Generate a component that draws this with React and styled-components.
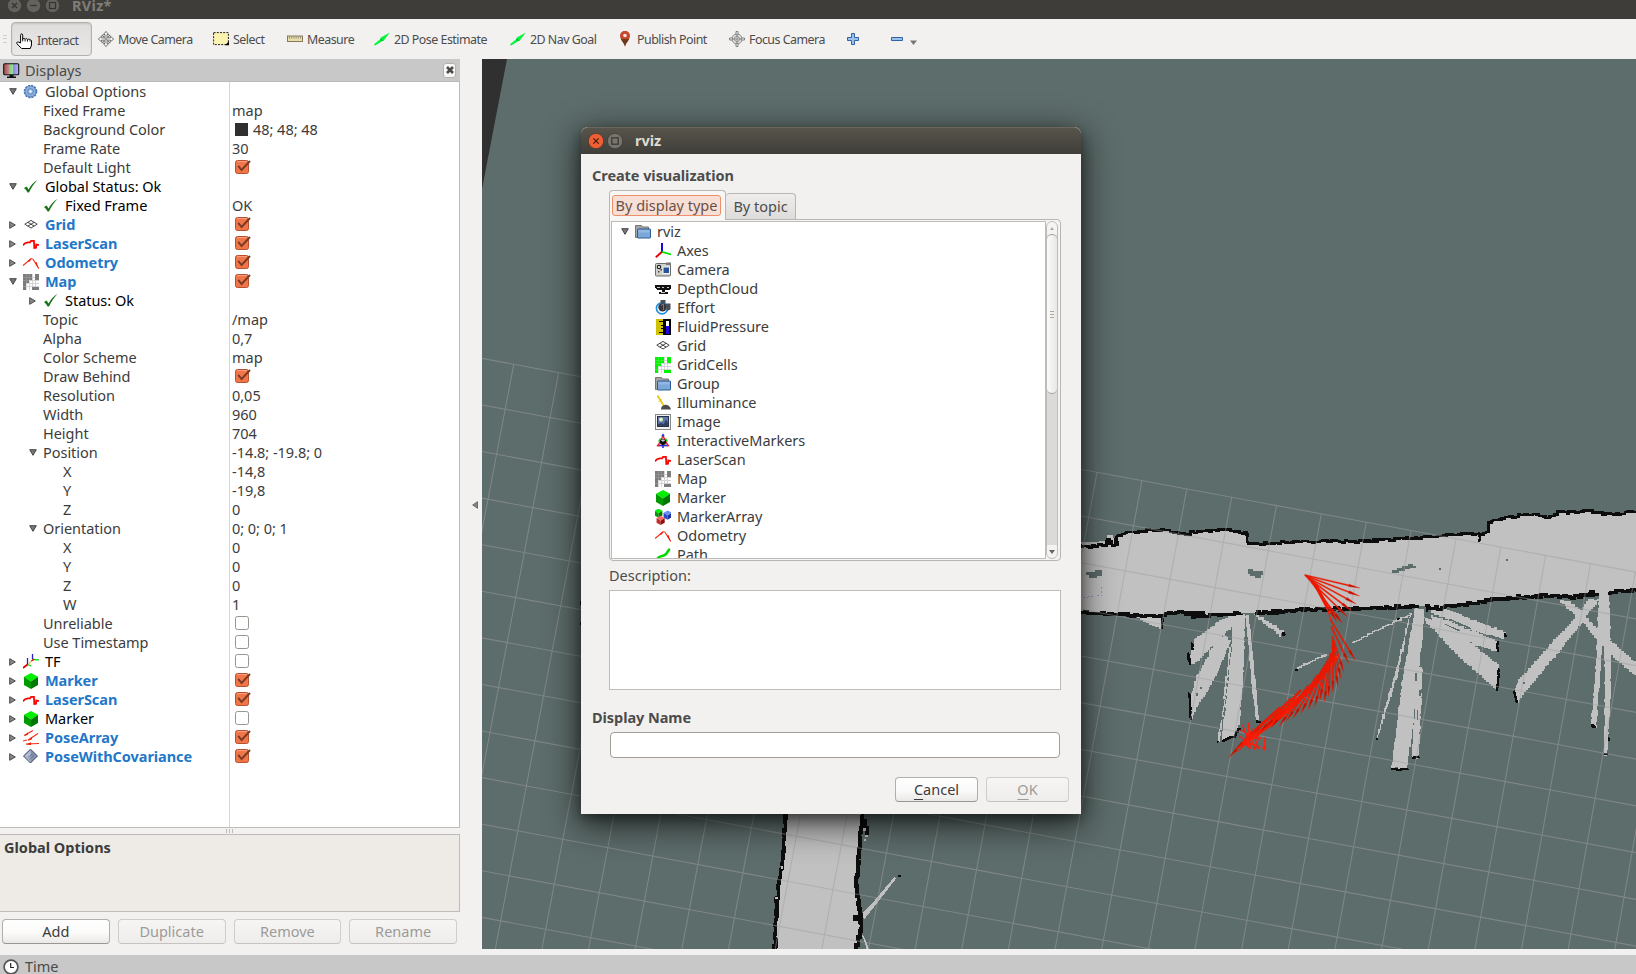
import React from "react";
import styled, { createGlobalStyle, css } from "styled-components";

const GlobalStyle = createGlobalStyle`
  * { box-sizing: border-box; }
  html, body { margin: 0; padding: 0; overflow: hidden; }
  body {
    font-family: "Noto Sans", "Open Sans", sans-serif;
    font-size: 14.5px;
    line-height: 19px;
    color: #3c3c3c;
    background: #f2f1ef;
  }
  svg { display: block; }
`;

/* ---------- window frame ---------- */

const Window = styled.div`
  position: relative;
  width: 1636px;
  height: 974px;
  display: flex;
  flex-direction: column;
  background: #f2f1ef;
  overflow: hidden;
`;

const TitleBar = styled.header`
  height: 19px;
  flex: none;
  display: flex;
  align-items: center;
  gap: 4px;
  padding: 0 0 8px 7px;
  background: #3e3d39;
  overflow: hidden;
`;

const TitleText = styled.span`
  margin-left: 8px;
  font-weight: 700;
  letter-spacing: 0.3px;
  color: #807d78;
`;

const Toolbar = styled.nav`
  height: 40px;
  flex: none;
  display: flex;
  align-items: center;
  padding-left: 3px;
  background: #f2f1ef;
`;

const Handle = styled.span`
  width: 4px;
  height: 8px;
  margin-right: 4px;
  border-top: 1px solid #d0cecb;
  border-bottom: 1px solid #d0cecb;
  background: linear-gradient(#f2f1ef 0 2px, #d0cecb 2px 3px, #f2f1ef 3px);
`;

const Tool = styled.button`
  width: ${(p) => p.$w}px;
  height: 34px;
  flex: none;
  display: flex;
  align-items: center;
  gap: 4px;
  padding: 0;
  border: 1px solid transparent;
  border-width: 1px 0;
  background: none;
  font: inherit;
  font-size: 12.4px;
  letter-spacing: -0.5px;
  white-space: nowrap;
  color: #4c4c4c;
  ${(p) =>
    p.$active &&
    css`
      margin-right: 6px;
      padding: 3px 0 0 4px;
      gap: 5px;
      border: 1px solid #b4b1ad;
      border-radius: 4px;
      background: linear-gradient(#dfdddb, #ebe9e7);
      box-shadow: inset 0 1px 2px rgba(0, 0, 0, 0.12);
    `}
`;

const Workspace = styled.main`
  height: 890px;
  flex: none;
  display: flex;
`;

const StatusBar = styled.footer`
  height: 19px;
  margin-top: 6px;
  flex: none;
  display: flex;
  align-items: center;
  gap: 6px;
  padding: 4px 0 0 3px;
  background: #c8c8c8;
  color: #4a4a4a;
  overflow: hidden;
`;

/* ---------- displays panel ---------- */

const Panel = styled.aside`
  width: 460px;
  flex: none;
  display: flex;
  flex-direction: column;
`;

const PanelHeader = styled.div`
  height: 23px;
  display: flex;
  align-items: center;
  gap: 5px;
  padding: 0 4px 0 3px;
  background: #c8c8c8;
  border-bottom: 1px solid #bcbab6;
  color: #4a4a4a;
`;

const PanelClose = styled.span`
  width: 13px;
  height: 15px;
  margin-left: auto;
  display: grid;
  place-items: center;
  border: 1px solid #b5b2ad;
  border-radius: 3px;
  background: #f8f7f6;
`;

const Tree = styled.div`
  height: 746px;
  display: flex;
  flex-direction: column;
  background: #fff;
  border-right: 1px solid #bebcb8;
  border-bottom: 1px solid #bebcb8;
`;

const Row = styled.div`
  height: 19px;
  flex: none;
  display: flex;
`;

const NameCell = styled.div`
  width: ${(p) => (p.$wide ? "100%" : "230px")};
  display: flex;
  align-items: center;
  padding-left: ${(p) => 3 + p.$depth * 20}px;
  border-right: ${(p) => (p.$wide ? "none" : "1px solid #d8d6d4")};
`;

const ArrowSlot = styled.span`
  width: 20px;
  flex: none;
  display: grid;
  place-items: center;
  padding-right: 1px;
`;

const IconSlot = styled.span`
  width: 16px;
  height: 16px;
  margin-right: 6px;
  flex: none;
`;

const Label = styled.span`
  white-space: nowrap;
  color: ${(p) => ({ on: "#2277c8", status: "#000" })[p.$tone] || "#3c3c3c"};
  font-weight: ${(p) => (p.$tone === "on" ? 700 : 400)};
  letter-spacing: ${(p) => (p.$tone === "on" ? "-0.06px" : "-0.03px")};
`;

const ValueCell = styled.div`
  display: flex;
  align-items: center;
  gap: 4px;
  padding-left: 2px;
`;

const Swatch = styled.span`
  width: 13px;
  height: 13px;
  margin: 0 1px 0 3px;
  background: #303030;
`;

const Filler = styled.div`
  flex: 1;
  width: 230px;
  border-right: 1px solid #d8d6d4;
`;

const Splitter = styled.div`
  height: 6px;
  display: flex;
  justify-content: center;
  align-items: center;
  gap: 2px;
  padding-right: 2px;
`;

const Grip = styled.i`
  width: 1px;
  height: 4px;
  background: #bdbbb7;
`;

const HelpBox = styled.div`
  height: 78px;
  padding: 3px 4px;
  border: 1px solid #bebcb8;
  border-left: none;
  background: #eeebe6;
  font-weight: 700;
`;

const ButtonRow = styled.div`
  display: flex;
  gap: 8px;
  padding: 7px 3px 0 2px;
`;

const PushButton = styled.button`
  flex: ${(p) => (p.$w ? "none" : 1)};
  width: ${(p) => (p.$w ? p.$w + "px" : "auto")};
  height: 25px;
  padding: 0;
  border: 1px solid ${(p) => (p.$off ? "#cfcdca" : "#b2afab")};
  border-bottom-color: ${(p) => (p.$off ? "#c5c3c0" : "#999693")};
  border-radius: 4px;
  background: ${(p) => (p.$off ? "linear-gradient(#f6f5f4, #eeedeb)" : "linear-gradient(#fff, #fbfaf9 55%, #ebe9e7)")};
  font: inherit;
  color: ${(p) => (p.$off ? "#9c9b99" : "#3c3c3c")};
`;

const Mnemonic = styled.span`
  text-decoration: underline;
  text-underline-offset: 4px;
  text-decoration-thickness: 1px;
`;

const Gutter = styled.div`
  width: 22px;
  flex: none;
  display: flex;
  align-items: center;
  justify-content: center;
  padding: 1px 0 0 7px;
`;

const Viewport = styled.section`
  flex: 1;
  background: #5d6d6b;
`;

/* ---------- dialog ---------- */

const Dialog = styled.div`
  position: absolute;
  left: 581px;
  top: 127px;
  width: 500px;
  height: 687px;
  display: flex;
  flex-direction: column;
  background: #f2f1ef;
  border-radius: 7px 7px 0 0;
  box-shadow: 0 9px 34px 2px rgba(0, 0, 0, 0.68), 0 4px 12px rgba(0, 0, 0, 0.35);
`;

const DialogTitle = styled.div`
  height: 27px;
  display: flex;
  align-items: center;
  gap: 3px;
  padding: 0 0 1px 7px;
  border-radius: 7px 7px 0 0;
  border-top: 1px solid #6a6659;
  background: linear-gradient(#57544b, #3f3e39);
  color: #dfdbd2;
  font-weight: 700;
`;

const DialogName = styled.span`
  margin-left: 9px;
`;

const DialogBody = styled.div`
  display: flex;
  flex-direction: column;
  padding: 11px 20px 0 28px;
`;

const Heading = styled.h2`
  margin: 0 0 0 -17px;
  font-size: 14.5px;
  line-height: 20px;
  font-weight: 700;
  letter-spacing: -0.06px;
  color: #4c4c4c;
`;

const Tabs = styled.div`
  height: 29px;
  margin-top: 5px;
  display: flex;
  align-items: flex-end;
  position: relative;
`;

const Tab = styled.div`
  height: ${(p) => (p.$active ? 30 : 26)}px;
  width: ${(p) => (p.$active ? 117 : 70)}px;
  margin-bottom: ${(p) => (p.$active ? -1 : 0)}px;
  padding: ${(p) => (p.$active ? "4px 4px 3px 2px" : "0")};
  display: flex;
  align-items: center;
  justify-content: center;
  border: 1px solid #b9b6b2;
  border-bottom: none;
  border-left-width: ${(p) => (p.$active ? 1 : 0)}px;
  border-radius: 4px 4px 0 0;
  background: ${(p) => (p.$active ? "#f8f7f6" : "linear-gradient(#efeeec, #dedcda)")};
  color: #4c4c4c;
`;

const TabFocus = styled.span`
  width: 109px;
  height: 21px;
  margin-bottom: 1px;
  display: grid;
  place-items: center;
  white-space: nowrap;
  border: 1px solid #ee8f6c;
  border-radius: 3px;
  background: #f8dfd6;
  color: #6b4f46;
`;

const TabPane = styled.div`
  height: 342px;
  padding: 1px;
  display: flex;
  border: 1px solid #b9b6b2;
  border-radius: 0 4px 4px 4px;
  background: #f5f4f2;
`;

const TypeList = styled.div`
  width: 435px;
  height: 338px;
  border: 1px solid #bebcb8;
  background: #fff;
  overflow: hidden;
`;

const ScrollBar = styled.div`
  flex: 1;
  height: 338px;
  margin-right: 1px;
  display: flex;
  flex-direction: column;
  border: 1px solid #bebcb8;
  border-radius: 6px;
  background: #dcdad8;
  overflow: hidden;
`;

const ScrollArrow = styled.span`
  height: 13px;
  flex: none;
  display: grid;
  place-items: center;
  background: #f4f3f2;
`;

const Thumb = styled.span`
  height: 160px;
  margin-top: -1px;
  flex: none;
  display: flex;
  flex-direction: column;
  align-items: center;
  justify-content: center;
  gap: 2px;
  border: 1px solid #a19e9a;
  border-width: 1px 0;
  border-radius: 6px;
  background: linear-gradient(90deg, #fbfbfa, #e9e7e5);
`;

const ThumbLine = styled.i`
  width: 4px;
  height: 1px;
  background: #aaa7a3;
`;

const Track = styled.span`
  flex: 1;
`;

const FieldLabel = styled.label`
  margin-top: 5px;
  line-height: 19px;
  color: #4c4c4c;
`;

const DescriptionBox = styled.div`
  height: 100px;
  margin: 5px 0 17px;
  border: 1px solid #bebcb8;
  background: #fff;
`;

const NameInput = styled.input`
  height: 26px;
  margin: 5px 1px 19px;
  border: 1px solid #a19e9a;
  border-radius: 4px;
  background: #fff;
`;

const DialogActions = styled.div`
  display: flex;
  justify-content: flex-end;
  gap: 8px;
  margin-right: -8px;
`;

/* ---------- small graphics ---------- */

const Svg = ({ s = 16, children, ...rest }) => (
  <svg width={s} height={s} viewBox={`0 0 ${s} ${s}`} {...rest}>
    {children}
  </svg>
);

const Down = () => (
  <svg width="8" height="7" viewBox="0 0 8 7">
    <path d="M.7.7h6.6L4 6.3z" fill="#777" stroke="#444" />
  </svg>
);
const Right = () => (
  <svg width="7" height="8" viewBox="0 0 7 8">
    <path d="M.7.7v6.6L6.3 4z" fill="#888" stroke="#4a4a4a" />
  </svg>
);

const WindowButton = ({ kind, fill, stroke, s = 15 }) => (
  <svg width={s} height={s} viewBox="0 0 15 15">
    <circle cx="7.5" cy="7.5" r="7.2" fill={fill} stroke="#33322e" strokeWidth=".6" />
    {kind === "close" && <path d="M5 5l5 5M10 5l-5 5" stroke={stroke} strokeWidth="1.2" />}
    {kind === "min" && <path d="M4.200 7.500h6.600" stroke={stroke} strokeWidth="1.200" />}
    {kind === "max" && <rect x="4.500" y="4.500" width="6" height="6" fill="none" stroke={stroke} strokeWidth="1.200" />}
  </svg>
);

const Check = ({ on }) => (
  <svg width="19" height="17" viewBox="-1 0 19 17">
    <rect x="2.500" y="1.500" width="13" height="13" rx="2" fill={on ? "#f0764a" : "#fff"} stroke={on ? "#b9502c" : "#98948f"} />
    {on && <path d="M4 2.600h10" stroke="#f9a382" />}
    {on && <path d="M5.200 6.800l3.400 4.200L17 2" fill="none" stroke="#7a3a24" strokeWidth="1.900" />}
  </svg>
);

const cells = [
  [0, 0, 9, 6], [12, 0, 4, 6], [0, 6, 6, 3], [0, 9, 3, 7], [9, 13, 7, 3],
];
const CellGrid = ({ color }) => (
  <Svg shapeRendering="crispEdges">
    <path d="M3 0h1v16h-1zM6 0h1v16h-1zM9 0h1v16h-1zM12 0h1v16h-1zM0 3h16v1H0zM0 6h16v1H0zM0 9h16v1H0zM0 12h16v1H0z" fill="#d4d4d4" />
    {cells.map(([x, y, w, h], i) => (
      <rect key={i} x={x} y={y} width={w} height={h} fill={color} />
    ))}
    <path d="M3 0h1v16h-1zM6 0h1v9h-1zM0 3h9v1H0zM0 6h6v1H0zM0 12h3v1H0z" fill="#fff" opacity=".16" />
  </Svg>
);

const Cube = ({ x = 0, y = 0, k = 1, top = "#00f000", left = "#009a00", right = "#007800" }) => (
  <g transform={`translate(${x} ${y}) scale(${k})`}>
    <path d="M8 0l7 3.800L8 8.500 1 3.800z" fill={top} />
    <path d="M1 3.800l7 4.700V16l-7-4z" fill={left} />
    <path d="M15 3.800L8 8.500V16l7-4z" fill={right} />
  </g>
);

const GreenArrow = () => (
  <Svg>
    <path d="M0 13.200l1.200 1.300L8 10.200l1.600-.4L15.800 1.500 6.500 6.800l-.3 1.400z" fill="#00f53a" />
    <path d="M6.300 7.800l3.200 2L7.300 9.600z" fill="#087d20" />
  </Svg>
);

const icons = {
  gear: (
    <Svg>
      <circle cx="7.500" cy="7.500" r="5.600" fill="#8fb2dc" stroke="#3a6cab" strokeWidth=".8" />
      <circle cx="7.500" cy="7.500" r="6.100" fill="none" stroke="#4a79b5" strokeWidth="1.500" strokeDasharray="2 1.190" />
      <circle cx="7.500" cy="7.500" r="2.800" fill="#a9c5e6" stroke="#4a7cbb" strokeWidth=".9" />
      <circle cx="7.500" cy="7.500" r="1.100" fill="#fff" />
    </Svg>
  ),
  ok: (
    <Svg>
      <path d="M1 9l2.600-1.600 2 3C7.800 6.300 10.500 3 14.500 1 11 4.500 8.300 8.500 6 13.500H4.600C3.700 11.800 2.500 10.300 1 9z" fill="#1a741a" />
    </Svg>
  ),
  grid: (
    <Svg>
      <path d="M1.800 7.200L8 3.400l6.200 3.800L8 11zM4.900 5.300l6.200 3.800M11.100 5.300L4.900 9.100" fill="none" stroke="#444" strokeWidth="1" />
    </Svg>
  ),
  laser: (
    <Svg>
      <path d="M0 9.300l2-2.100 3-.8h2l1.200-1.600h2.700l.4 7.200 1.700-.3.200-3.200 2.800.4" fill="none" stroke="#f00" strokeWidth="1.800" />
    </Svg>
  ),
  odometry: (
    <Svg>
      <path d="M0 10.500L8.500 3.500M9.500 3.500L15.800 13.500" stroke="#f62b10" strokeWidth="1.100" />
      <path d="M4.500 6L9 2.800 6.500 6.800zM12 7.800l1.600-.8L15.800 14.500z" fill="#f01800" />
    </Svg>
  ),
  map: <CellGrid color="#7c7c7c" />,
  gridcells: <CellGrid color="#00f400" />,
  tf: (
    <Svg>
      <path d="M4.500 4v7M9.500 0v5" stroke="#22c" strokeWidth="1.300" />
      <path d="M4.500 10.500l4 1.500M10 5.500l6 .3" stroke="#0d0" strokeWidth="1.300" />
      <path d="M4.500 10.500L0 14" stroke="#e00" strokeWidth="1.800" />
      <path d="M10 5.500L5.500 10" stroke="#ecc070" strokeWidth="1.500" />
      <path d="M11 5L8.500 7" stroke="#e00" strokeWidth="1.500" />
    </Svg>
  ),
  marker: (
    <Svg>
      <Cube />
    </Svg>
  ),
  markers: (
    <Svg>
      <Cube x={-1} y={-0.3} k={0.56} />
      <Cube x={8} y={1.5} k={0.58} top="#6a90f5" left="#2848c8" right="#1832a0" />
      <Cube x={1} y={6.700} k={0.58} top="#f26a6a" left="#c82828" right="#8c1010" />
    </Svg>
  ),
  posearray: (
    <Svg>
      <path d="M1 5.500l9-5M5 10l10-6.500M3 14l13-.5M0 11l4-1" stroke="#f43018" strokeWidth="1.200" />
      <path d="M1 6.300l4-3.800v2.300zM5 11l4-4v2.200zM3 14.500l5-2.200v2.600z" fill="#e81c00" />
    </Svg>
  ),
  covariance: (
    <Svg>
      <path d="M7.500.2l7 6.800-7 7-7-7z" fill="#8592ad" stroke="#3c4866" />
      <path d="M7.500 1.200v12l-6-6.200z" fill="#b4bed0" />
      <path d="M5 8.500l5-4M6 10.500l5-4" stroke="#6a7898" />
    </Svg>
  ),
  folder: (
    <Svg>
      <path d="M.5 13.500v-12h6l1 1.500h6v10z" fill="#a4a4a2" stroke="#777" />
      <rect x="2.500" y="5" width="13" height="9" rx=".5" fill="#7ba7d9" stroke="#2d5c98" />
      <path d="M3.500 6h11v2.500h-11z" fill="#94b8e2" />
    </Svg>
  ),
  axes: (
    <Svg>
      <path d="M7 0v9" stroke="#0000e8" strokeWidth="1.900" />
      <path d="M7 8.800l9 2.600" stroke="#00ea00" strokeWidth="1.900" />
      <path d="M7 8.800L.8 14.300" stroke="#e80000" strokeWidth="1.900" />
    </Svg>
  ),
  camera: (
    <Svg>
      <rect x=".5" y="1.500" width="15" height="12.500" rx="1" fill="#cfcfcb" stroke="#6c6c68" />
      <circle cx="4" cy="5" r="1.700" fill="#fff" stroke="#222" strokeWidth="1.200" />
      <rect x="8" y="5" width="6.500" height="6.500" fill="#27529a" stroke="#f4f4f4" />
      <path d="M11 .5h5v2.500h-5z" fill="#777" />
      <path d="M3 9h1.500v1.500H3zM5.500 7H7v1.500H5.500z" fill="#444" />
    </Svg>
  ),
  depth: (
    <Svg shapeRendering="crispEdges">
      <path d="M0 4h16v3l-2 2H2L0 7zM7 9h3v2H7zM4 11h9v2H4z" fill="#111" />
      <path d="M2 6h3M7 6h2M12 6h2M6 11.500h4" stroke="#ccc" />
    </Svg>
  ),
  effort: (
    <Svg>
      <circle cx="7" cy="8.300" r="5.600" fill="none" stroke="#1b8fe6" strokeWidth="1.600" />
      <circle cx="7.500" cy="7.300" r="4.200" fill="#34383c" />
      <path d="M5.500 0h5v3.500h-5zM11 3.500h4.500v6L11.500 11z" fill="#4a5056" />
      <path d="M6 5.500l2.500-1.500v6" stroke="#777" fill="none" />
    </Svg>
  ),
  pressure: (
    <Svg shapeRendering="crispEdges">
      <rect x="1" y="0" width="8" height="16" fill="#cfc000" />
      <path d="M4 2h5v1H4zM6 6h3v1H6zM6 9h3v1H6zM4 13h5v1H4zM8 0h8v16H8z" fill="#000" />
      <rect x="11" y="2" width="3" height="6" fill="#fff" />
      <rect x="11" y="7" width="3" height="8" fill="#2200e0" />
    </Svg>
  ),
  illuminance: (
    <Svg>
      <path d="M6 14.500c0-6.500 9-6 10 0z" fill="#4c4c4c" />
      <path d="M2.500.5L8.300 10" stroke="#ecc60c" strokeWidth="1.800" />
      <path d="M3.500 6.500l3.500-2" stroke="#ecc60c" strokeWidth="1" />
    </Svg>
  ),
  image: (
    <Svg>
      <rect x=".5" y=".5" width="15" height="15" fill="#f2f2f0" stroke="#888" />
      <rect x="2.500" y="2.500" width="11" height="10" fill="#5a76ac" stroke="#26324c" />
      <path d="M3 10l3-1 3 1 1-3 1.500-1 2 4.500V12H3z" fill="#33415f" />
      <circle cx="6" cy="5.500" r="1.900" fill="#eef2b0" />
    </Svg>
  ),
  interactive: (
    <Svg>
      <path d="M8 3L3 12.500h10z" fill="#fff" stroke="#e02038" strokeWidth="1.400" />
      <path d="M4 12.500h8" stroke="#2233e0" strokeWidth="1.400" />
      <path d="M6.200 3.200L8 .2l1.800 3z" fill="#2233e0" />
      <path d="M5.500 5.500l-1.800 3M10.500 5.500l1.800 3" stroke="#0c0" strokeWidth="1.400" />
      <path d="M1.300 13l2-2 .5 2.500zM14.700 13l-2-2-.5 2.500z" fill="#e02038" />
      <path d="M5 7.500l3-2 3 2v3l-3 2-3-2z" fill="#111" />
      <path d="M5.800 7.500L8 6.200l2.200 1.300L8 8.800z" fill="#ccc" />
      <path d="M7.200 12.500h1.600v2.500H7.200z" fill="#2233e0" />
    </Svg>
  ),
  path: (
    <Svg>
      <path d="M1.500 14c1-6 6.500-4 9-6.500 2-1.500 2-4 4.500-5.500" fill="none" stroke="#00d800" strokeWidth="2.600" />
    </Svg>
  ),
  hand: (
    <Svg>
      <path d="M4.600 10V2.200C4.600.4 6.700.4 6.700 2.200V6.300c.2-1.100 2.300-1.100 2.400 0 .3-.9 2.300-.8 2.400.3.400-.8 2.400-.7 2.600.4.400-.3 1.400-.1 1.400 1v4l-1.200 3.500H5.600L1 10.800C.2 9 2 8.300 3 9.400z" fill="#fff" stroke="#000" strokeWidth="1" />
      <path d="M6.700 6v2.400M9.100 6.500v2M11.500 7v1.600M14 7.200v1.400" stroke="#000" strokeWidth=".9" />
    </Svg>
  ),
  move: (
    <Svg>
      <path d="M8 .4l2.600 3.100H9v3.400h3.500V5.300L15.700 8l-3.200 2.700V9.100H9v3.400h1.600L8 15.600l-2.600-3.100H7V9.100H3.500v1.600L.3 8l3.200-2.700v1.600H7V3.500H5.400z" fill="#f6f6f6" stroke="#555" strokeWidth=".8" />
      <path d="M3.800 3.800l2.600 2.600M12.200 3.800L9.600 6.400M3.800 12.200l2.600-2.600M12.200 12.200L9.600 9.600" stroke="#777" strokeWidth="1.200" />
      <circle cx="8" cy="8" r="1" fill="#777" />
    </Svg>
  ),
  select: (
    <Svg>
      <rect x=".6" y="1.600" width="14.800" height="12" fill="#fdf3b0" stroke="#222" strokeWidth="1" strokeDasharray="2 1.200" />
      <path d="M12 14.200h4v-4z" fill="#000" />
    </Svg>
  ),
  ruler: (
    <Svg>
      <rect x=".5" y="5" width="15" height="5.500" fill="#e9deaa" stroke="#86795a" />
      <path d="M2.500 5.500v2M4.700 5.500v2M6.900 5.500v2M9.100 5.500v2M11.300 5.500v2M13.500 5.500v2" stroke="#777" strokeWidth=".8" />
    </Svg>
  ),
  arrow: <GreenArrow />,
  pin: (
    <Svg>
      <path d="M8 15.500C7 11 3 9 3 4.800a5 5 0 0 1 10 0c0 4.200-4 6.200-5 10.700z" fill="#c4492c" />
      <path d="M8 15.500C7.200 12 5 10.700 3.900 8h8.200C11 10.700 8.800 12 8 15.500z" fill="#6d3a1c" />
      <circle cx="8" cy="4.500" r="1.800" fill="#f6e2dc" />
    </Svg>
  ),
  focus: (
    <Svg>
      <circle cx="8" cy="8" r="5" fill="#e4e4e2" stroke="#888" strokeWidth="1" />
      <circle cx="8" cy="8" r="2.600" fill="none" stroke="#888" strokeWidth=".9" />
      <path d="M8 4v8M4 8h8" stroke="#888" strokeWidth=".9" />
      <path d="M7 .5h2v3.200H7zM7 12.300h2v3.200H7zM.5 7h3.200v2H.5zM12.300 7h3.200v2h-3.200z" fill="#f2f1ef" stroke="#777" strokeWidth=".9" />
    </Svg>
  ),
};

const Monitor = () => (
  <svg width="17" height="17" viewBox="0 0 17 17">
    <defs>
      <linearGradient id="screen">
        <stop offset=".1" stopColor="#b05858" />
        <stop offset=".33" stopColor="#c08888" />
        <stop offset=".36" stopColor="#7cc87c" />
        <stop offset=".62" stopColor="#a0e0a0" />
        <stop offset=".66" stopColor="#8888d8" />
        <stop offset="1" stopColor="#b4b4ff" />
      </linearGradient>
    </defs>
    <rect x=".7" y="1.700" width="15" height="11" rx="1" fill="url(#screen)" stroke="#111" strokeWidth="1.100" />
    <path d="M6.500 13h4v1.500h2.500V16h-9v-1.500h2.500z" fill="#111" />
  </svg>
);

const Clock = () => (
  <Svg s={16}>
    <circle cx="8" cy="8" r="6.900" fill="#fff" stroke="#555" strokeWidth="1.700" />
    <path d="M7.700 4v4.500H11" fill="none" stroke="#222" strokeWidth="1.200" />
  </Svg>
);

/* ---------- 3D scene ---------- */

// Turns a coarse outline into a stepped, noisy one, like an occupancy map edge.
function rough(points, step = 7, amp = 3.4, seed = 1) {
  let s = seed * 7919;
  const rnd = () => {
    s = (s * 16807) % 2147483647;
    return s / 2147483647 - 0.5;
  };
  rnd();
  let d = `M${points[0][0]} ${points[0][1]}`;
  for (let i = 1; i < points.length; i++) {
    const [x0, y0] = points[i - 1];
    const [x1, y1] = points[i];
    const n = Math.max(1, Math.round(Math.hypot(x1 - x0, y1 - y0) / step));
    for (let k = 1; k <= n; k++) {
      const x = x0 + ((x1 - x0) * k) / n + rnd() * amp;
      const y = y0 + ((y1 - y0) * k) / n + rnd() * amp * 1.6;
      d += `H${x.toFixed(1)}V${y.toFixed(1)}`;
    }
  }
  return d;
}
const poly = (pts) => "M" + pts.map((p) => p.join(" ")).join("L") + "Z";

const wallTop = [[0, 198], [60, 199], [80, 196], [98, 192], [106, 182], [118, 198], [130, 196], [128, 168], [165, 158], [205, 152], [245, 149], [275, 154], [310, 162], [350, 155], [395, 152], [430, 149], [470, 155], [491, 162], [492, 191], [560, 189], [620, 186], [700, 184], [800, 184], [900, 178], [1000, 172], [1050, 165], [1100, 162], [1160, 158], [1160, 126], [1195, 112], [1240, 108], [1275, 103], [1318, 112], [1350, 98], [1440, 93], [1475, 103], [1575, 95]];
const wallBottom = [
  [[0, 398], [80, 400], [110, 403], [155, 403], [200, 408], [255, 406], [290, 398], [330, 401], [370, 409], [420, 405], [472, 400]],
  [[512, 400], [600, 392], [700, 388], [780, 387], [880, 382], [962, 380]],
  [[982, 378], [1005, 386], [1050, 380], [1100, 372], [1150, 362], [1230, 352], [1320, 347], [1400, 350], [1458, 342]],
  [[1490, 340], [1520, 332], [1575, 328]],
];
const rays = [
  [[455, 405], [420, 420], [345, 480], [330, 552], [345, 548], [428, 462], [455, 430]],
  [[428, 464], [408, 480], [350, 595], [334, 650], [335, 715], [347, 690], [385, 620], [402, 590], [446, 478]],
  [[450, 400], [484, 400], [482, 560], [470, 735], [455, 768], [420, 782], [436, 620], [448, 500]],
  [[442, 500], [447, 500], [430, 655], [424, 650]],
  [[428, 650], [432, 660], [414, 785], [408, 783]],
  [[487, 405], [495, 405], [508, 540], [524, 722], [515, 722], [499, 560]],
  [[508, 402], [530, 412], [594, 458], [586, 468]],
  [[186, 412], [258, 412], [252, 447]],
  [[940, 400], [946, 400], [905, 600], [853, 777], [847, 773], [900, 580]],
  [[955, 385], [982, 385], [978, 470], [950, 740], [935, 866], [890, 862], [920, 600]],
  [[962, 560], [976, 560], [972, 700], [966, 836], [946, 830], [955, 700]],
  [[990, 390], [1045, 388], [1110, 418], [1208, 458], [1203, 476], [1120, 452]],
  [[1000, 405], [1100, 448], [1186, 485], [1184, 512], [1130, 498], [1010, 430]],
  [[975, 410], [1030, 430], [1110, 490], [1188, 560], [1185, 630], [1080, 530]],
  [[1435, 358], [1468, 358], [1420, 430], [1242, 668], [1230, 640], [1240, 598], [1400, 410]],
  [[1358, 360], [1382, 362], [1480, 470], [1575, 555], [1575, 592], [1490, 515], [1430, 435]],
  [[1465, 330], [1494, 330], [1498, 500], [1474, 500], [1458, 745], [1442, 735], [1458, 540]],
  [[1480, 490], [1500, 490], [1498, 640], [1488, 826], [1479, 822], [1482, 640]],
];
const tips = [
  [[338, 488], [340, 510]], [[326, 520], [332, 555]], [[330, 640], [334, 718]], [[408, 786], [412, 786]], [[420, 782], [455, 770], [470, 742]],
  [[514, 722], [525, 724]], [[586, 460], [594, 466]], [[256, 412], [254, 447]], [[848, 777], [852, 777]], [[890, 868], [935, 868]], [[948, 834], [966, 832]],
  [[1202, 462], [1210, 472]], [[1184, 486], [1184, 514]], [[1188, 568], [1184, 632]], [[1230, 632], [1238, 668]], [[1442, 734], [1455, 746]], [[1480, 822], [1488, 826]],
  [[1494, 775], [1494, 785]], [[624, 569], [628, 569]], [[1135, 160], [1134, 186]], [[906, 416], [912, 416]],
];
const arrows = [
  [650, 285, 803, 324], [652, 287, 802, 348], [655, 290, 793, 372], [657, 292, 780, 392], [660, 296, 768, 410], [668, 305, 754, 430], [680, 320, 740, 425],
  [722, 420, 790, 540], [724, 440, 772, 550], [727, 470, 758, 575], [727, 480, 750, 595], [727, 490, 742, 620], [728, 500, 728, 635], [722, 520, 716, 650], [720, 525, 705, 665],
  [715, 535, 692, 660], [710, 545, 678, 680], [705, 555, 660, 688], [700, 565, 640, 700], [695, 575, 618, 715], [685, 585, 600, 722], [660, 615, 580, 738], [640, 630, 556, 745],
  [638, 630, 540, 745], [610, 655, 525, 758], [585, 682, 500, 768], [580, 682, 480, 782], [560, 705, 470, 800], [540, 722, 455, 812], [520, 745, 440, 832],
];
const scribble = [[495, 728, 492, 800], [478, 735, 500, 795], [468, 768, 515, 800], [505, 745, 485, 790], [510, 765, 522, 805], [540, 772, 538, 810], [490, 775, 498, 806], [472, 750, 524, 780], [480, 790, 520, 770], [500, 770, 512, 808]];

const arrowPath = ([x0, y0, x1, y1], w) => {
  const l = Math.hypot(x1 - x0, y1 - y0);
  const ux = (x1 - x0) / l, uy = (y1 - y0) / l;
  const hx = x1 - ux * 32, hy = y1 - uy * 32;
  const p = (x, y, k) => `${(x - uy * k).toFixed(1)} ${(y + ux * k).toFixed(1)}`;
  return {
    shaft: `M${p(x0, y0, w)}L${p(hx, hy, w)}L${p(hx, hy, -w)}L${p(x0, y0, -w)}Z`,
    head: `M${p(hx, hy, w * 2)}L${x1} ${y1}L${p(hx, hy, -w * 2)}Z`,
  };
};

const gridPath = (() => {
  let d = "";
  for (let i = 0; i <= 36; i++) d += `M${513.7 + 44.87 * i} ${364.7 + 8.29 * i}L${402 + 46.65 * i} 949`;
  for (let v = 0; v <= 12; v++) d += `M482 ${358.4 + 46.58 * v}L1636 ${572.1 + 46.75 * v}`;
  return d;
})();

const edgeL = [[142, 0], [142, 40], [138, 110], [132, 170], [128, 230], [122, 290], [112, 350], [108, 430], [105, 512]];
const edgeR = [[362, 0], [368, 50], [366, 110], [360, 190], [352, 280], [350, 340], [358, 400], [362, 450], [350, 512]];

const Scene = () => (
  <svg width="1154" height="890" viewBox="482 59 1154 890">
    <path d="M482 59h25L482 189z" fill="#303030" />
    <g transform="translate(1070 480) scale(.361 .33333)" shapeRendering="crispEdges">
      <path d={poly([...wallTop, ...wallBottom.slice().reverse().flatMap((w) => w.slice().reverse())])} fill="#c1c1c1" />
      {rays.map((r, i) => (
        <path key={i} d={rough([...r, r[0]], 9, 3, i + 5) + "Z"} fill="#c1c1c1" />
      ))}
      <path d={rough([[948, 402], [800, 480], [780, 490]], 7, 3, 3)} fill="none" stroke="#c1c1c1" strokeWidth="4" />
      <path d={rough([[712, 525], [680, 540], [630, 568]], 7, 3, 4)} fill="none" stroke="#c1c1c1" strokeWidth="4" />
      <path d="M360 620h6v8h-6zM350 640h5v8h-5zM955 580h5v22h-5zM968 630h4v18h-4zM1050 415l60 28v5l-60-28zM1040 432l40 18v5l-40-20zM1255 605h6v6h-6zM960 690h4v30h-4z" fill="#5d6d6b" />
      <path d="M44 276h26v-6h20v18H76v5H52v-8h-8zM494 268h12v6h30v12h-6v9h-18v-6h-14v-6h-4zM893 271h14v-6h12v-7h16v-5h14v4h9v7h-16v4h-14v6h-18v5h-17zM1022 263h5v6h-5zM1208 237h5v5h-5z" fill="#5d6d6b" />
      <path d="M30 186h50v-4h22v-16h16v8h10v22H30z" fill="#c1c1c1" />
      <path d={rough(wallTop, 8, 5, 11)} fill="none" stroke="#0d0d0d" strokeWidth="7.500" />
      <path d="M98 180h14v16h-14z" fill="#0d0d0d" />
      {wallBottom.map((w, i) => (
        <path key={i} d={rough(w, 8, 5.500, 21 + i)} fill="none" stroke="#0d0d0d" strokeWidth="9" />
      ))}
      {tips.map((t, i) => (
        <path key={i} d={rough(t, 6, 3, 31 + i)} fill="none" stroke="#0d0d0d" strokeWidth="6" />
      ))}
      <path d="M315 392h60v22h-26v4h-14v-10h-20zM1438 330h16v20h-16zM985 372h8v24h-8z" fill="#0d0d0d" />
      <path d="M36 354l30-6M74 346h16M88 322v20M62 152l14 20M54 192l6 4" stroke="#6468c8" strokeWidth="1.500" strokeDasharray="5 6" fill="none" />
    </g>
    <g transform="translate(740 780) scale(.33333)" shapeRendering="crispEdges">
      <path d={poly([...edgeL, ...edgeR.slice().reverse()])} fill="#c1c1c1" />
      <path d="M368 412l6 4 40-50 20-26 34-44-4-6-34 40-30 36-32 34zM364 462l10 24 6 24h8l-8-24-8-16z" fill="#c1c1c1" />
      <path d={rough(edgeL, 9, 6, 8)} fill="none" stroke="#0d0d0d" strokeWidth="10" />
      <path d={rough(edgeR, 9, 7, 9)} fill="none" stroke="#0d0d0d" strokeWidth="11" />
      <path d="M340 404h28v20h-28zM474 284h9v8h-9zM366 118h14v20h6v28h-12v-14h-8z" fill="#0d0d0d" />
      <path d="M370 145h8v7h-8zM376 166h8v6h-8zM372 176h6v6h-6zM122 258h6v8h-6zM106 350h7v8h-7zM120 316h6v6h-6z" fill="#c1c1c1" />
    </g>
    <path d="M580 601h1v4h-1zM580 622h1v3h-1z" fill="#0d0d0d" />
    <path d={gridPath} fill="none" stroke="#a0a0a4" strokeOpacity=".5" strokeWidth="1.100" />
    <g transform="translate(1070 480) scale(.361 .33333)">
      <path d="M647 283l24 20 20 45 22 45 14 45 6 60-3 40-18 40-36 45-46 48-46 46-58 46-43 34-22 24 26-40 50-42 60-56 52-50 48-50 22-40 12-50-6-70-16-60-24-50z" fill="#fb1a00" />
      {arrows.map((a, i) => {
        const p = arrowPath(a, 1.900);
        return (
          <g key={i}>
            <path d={p.shaft} fill="#fb1a00" />
            <path d={p.shaft} fill="none" stroke="#c01400" strokeWidth=".8" />
            <path d={p.head} fill="#b81200" stroke="#fb1a00" strokeWidth="1" />
          </g>
        );
      })}
      {scribble.map(([a, b, c, d], i) => (
        <path key={i} d={`M${a} ${b}L${c} ${d}m-5-8l5 8 5-8`} fill="none" stroke="#ff1c0a" strokeWidth="3.200" />
      ))}
    </g>
  </svg>
);

/* ---------- data ---------- */

// depth, arrow, icon, label, tone, value
const rows = [
  [0, "d", "gear", "Global Options"],
  [1, "", "", "Fixed Frame", "", "map"],
  [1, "", "", "Background Color", "", "48; 48; 48", "swatch"],
  [1, "", "", "Frame Rate", "", "30"],
  [1, "", "", "Default Light", "", true],
  [0, "d", "ok", "Global Status: Ok", "status"],
  [1, "", "ok", "Fixed Frame", "status", "OK"],
  [0, "r", "grid", "Grid", "on", true],
  [0, "r", "laser", "LaserScan", "on", true],
  [0, "r", "odometry", "Odometry", "on", true],
  [0, "d", "map", "Map", "on", true],
  [1, "r", "ok", "Status: Ok", "status"],
  [1, "", "", "Topic", "", "/map"],
  [1, "", "", "Alpha", "", "0,7"],
  [1, "", "", "Color Scheme", "", "map"],
  [1, "", "", "Draw Behind", "", true],
  [1, "", "", "Resolution", "", "0,05"],
  [1, "", "", "Width", "", "960"],
  [1, "", "", "Height", "", "704"],
  [1, "d", "", "Position", "", "-14.8; -19.8; 0"],
  [2, "", "", "X", "", "-14,8"],
  [2, "", "", "Y", "", "-19,8"],
  [2, "", "", "Z", "", "0"],
  [1, "d", "", "Orientation", "", "0; 0; 0; 1"],
  [2, "", "", "X", "", "0"],
  [2, "", "", "Y", "", "0"],
  [2, "", "", "Z", "", "0"],
  [2, "", "", "W", "", "1"],
  [1, "", "", "Unreliable", "", false],
  [1, "", "", "Use Timestamp", "", false],
  [0, "r", "tf", "TF", "status", false],
  [0, "r", "marker", "Marker", "on", true],
  [0, "r", "laser", "LaserScan", "on", true],
  [0, "r", "marker", "Marker", "status", false],
  [0, "r", "posearray", "PoseArray", "on", true],
  [0, "r", "covariance", "PoseWithCovariance", "on", true],
];

const types = [
  ["axes", "Axes"], ["camera", "Camera"], ["depth", "DepthCloud"], ["effort", "Effort"], ["pressure", "FluidPressure"],
  ["grid", "Grid"], ["gridcells", "GridCells"], ["folder", "Group"], ["illuminance", "Illuminance"], ["image", "Image"],
  ["interactive", "InteractiveMarkers"], ["laser", "LaserScan"], ["map", "Map"], ["marker", "Marker"],
  ["markers", "MarkerArray"], ["odometry", "Odometry"], ["path", "Path"],
];

const tools = [
  ["hand", "Interact", 81], ["move", "Move Camera", 115], ["select", "Select", 74], ["ruler", "Measure", 87],
  ["arrow", "2D Pose Estimate", 136], ["arrow", "2D Nav Goal", 107], ["pin", "Publish Point", 112], ["focus", "Focus Camera", 118],
];

const NameContent = ({ depth, arrow, icon, label, tone, wide }) => (
  <NameCell $depth={depth} $wide={wide}>
    <ArrowSlot>
      {arrow === "d" && <Down />}
      {arrow === "r" && <Right />}
    </ArrowSlot>
    {icon && <IconSlot>{icons[icon]}</IconSlot>}
    <Label $tone={tone}>{label}</Label>
  </NameCell>
);

export default function App() {
  return (
    <>
      <GlobalStyle />
      <Window>
        <TitleBar>
          {["close", "min", "max"].map((k) => (
            <WindowButton key={k} kind={k} fill="#64625d" stroke="#35342f" />
          ))}
          <TitleText>RViz*</TitleText>
        </TitleBar>

        <Toolbar>
          <Handle />
          {tools.map(([icon, label, w], i) => (
            <Tool key={label} $w={w} $active={i === 0}>
              {icons[icon]}
              {label}
            </Tool>
          ))}
          <Tool $w={44}>
            <Svg s={12}>
              <path d="M4.500.5h3v4h4v3h-4v4h-3v-4h-4v-3h4z" fill="#9dc0ea" stroke="#2f63a8" />
            </Svg>
          </Tool>
          <Tool $w={30}>
            <svg width="26" height="12" viewBox="0 0 26 12">
              <path d="M.5 4.500h11v3H.5z" fill="#9dc0ea" stroke="#2f63a8" />
              <path d="M19 7.500h7L22.500 12z" fill="#777" />
            </svg>
          </Tool>
        </Toolbar>

        <Workspace>
          <Panel>
            <PanelHeader>
              <Monitor />
              Displays
              <PanelClose>
                <Svg s={8}>
                  <path d="M1 1l6 6M7 1L1 7" stroke="#4a4a4a" strokeWidth="2.600" />
                </Svg>
              </PanelClose>
            </PanelHeader>
            <Tree>
              {rows.map(([depth, arrow, icon, label, tone, value, swatch], i) => (
                <Row key={i}>
                  <NameContent {...{ depth, arrow, icon, label, tone }} />
                  <ValueCell>
                    {swatch && <Swatch />}
                    {typeof value === "boolean" ? <Check on={value} /> : <Label>{value}</Label>}
                  </ValueCell>
                </Row>
              ))}
              <Filler />
            </Tree>
            <Splitter>
              <Grip />
              <Grip />
              <Grip />
            </Splitter>
            <HelpBox>Global Options</HelpBox>
            <ButtonRow>
              <PushButton>Add</PushButton>
              <PushButton $off>Duplicate</PushButton>
              <PushButton $off>Remove</PushButton>
              <PushButton $off>Rename</PushButton>
            </ButtonRow>
          </Panel>
          <Gutter>
            <svg width="6" height="8" viewBox="0 0 6 8">
              <path d="M5.500.7v6.600L.7 4z" fill="#888" stroke="#555" strokeWidth=".8" />
            </svg>
          </Gutter>
          <Viewport>
            <Scene />
          </Viewport>
        </Workspace>

        <StatusBar>
          <Clock />
          Time
        </StatusBar>

        <Dialog>
          <DialogTitle>
            <WindowButton s={16} kind="close" fill="#ee5f33" stroke="#4a1d0c" />
            <WindowButton s={16} kind="max" fill="#77756d" stroke="#3a3935" />
            <DialogName>rviz</DialogName>
          </DialogTitle>
          <DialogBody>
            <Heading>Create visualization</Heading>
            <Tabs>
              <Tab $active>
                <TabFocus>By display type</TabFocus>
              </Tab>
              <Tab>By topic</Tab>
            </Tabs>
            <TabPane>
              <TypeList>
                <Row>
                  <NameContent wide depth={0} arrow="d" icon="folder" label="rviz" />
                </Row>
                {types.map(([icon, label]) => (
                  <Row key={label}>
                    <NameContent wide depth={1} icon={icon} label={label} />
                  </Row>
                ))}
              </TypeList>
              <ScrollBar>
                <ScrollArrow>
                  <svg width="4" height="3" viewBox="0 0 4 3">
                    <path d="M0 3h4L2 0z" fill="#aaa" />
                  </svg>
                </ScrollArrow>
                <Thumb>
                  <ThumbLine />
                  <ThumbLine />
                  <ThumbLine />
                </Thumb>
                <Track />
                <ScrollArrow>
                  <svg width="6" height="4" viewBox="0 0 6 4">
                    <path d="M0 0h6L3 4z" fill="#666" />
                  </svg>
                </ScrollArrow>
              </ScrollBar>
            </TabPane>
            <FieldLabel>Description:</FieldLabel>
            <DescriptionBox />
            <Heading>Display Name</Heading>
            <NameInput />
            <DialogActions>
              <PushButton $w={83}>
                <Mnemonic>C</Mnemonic>ancel
              </PushButton>
              <PushButton $w={83} $off>
                <Mnemonic>O</Mnemonic>K
              </PushButton>
            </DialogActions>
          </DialogBody>
        </Dialog>
      </Window>
    </>
  );
}
